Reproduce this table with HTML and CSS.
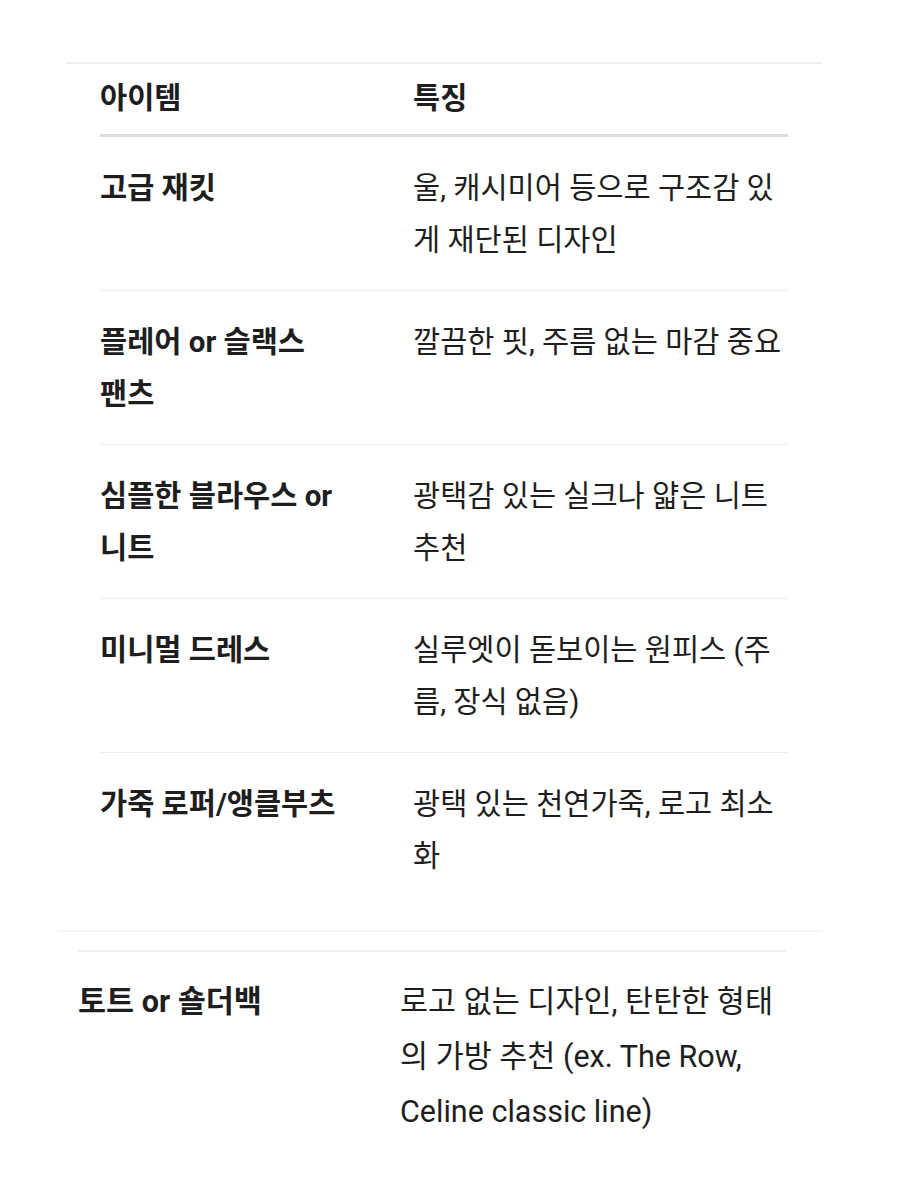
FILE: index.html
```html
<!DOCTYPE html>
<html lang="ko">
<head>
<meta charset="utf-8">
<link rel="stylesheet" href="styles.css">
</head>
<body>
<div class="page">
  <div class="rule-top"></div>
  <table class="tbl tbl-a">
    <thead>
      <tr><th class="c1">아이템</th><th class="c2">특징</th></tr>
    </thead>
    <tbody>
      <tr><td class="c1">고급 재킷</td><td class="c2">울, 캐시미어 등으로 구조감 있게 재단된 디자인</td></tr>
      <tr><td class="c1">플레어 or 슬랙스 팬츠</td><td class="c2">깔끔한 핏, 주름 없는 마감 중요</td></tr>
      <tr><td class="c1">심플한 블라우스 or 니트</td><td class="c2">광택감 있는 실크나 얇은 니트 추천</td></tr>
      <tr><td class="c1">미니멀 드레스</td><td class="c2">실루엣이 돋보이는 원피스 (주름, 장식 없음)</td></tr>
      <tr class="last"><td class="c1">가죽 로퍼/앵클부츠</td><td class="c2">광택 있는 천연가죽, 로고 최소화</td></tr>
    </tbody>
  </table>
  <div class="rule-faint"></div>
  <table class="tbl tbl-b">
    <tbody>
      <tr class="last"><td class="c1">토트 or 숄더백</td><td class="c2">로고 없는 디자인, 탄탄한 형태의 가방 추천 (ex. The Row, Celine classic line)</td></tr>
    </tbody>
  </table>
</div>
</body>
</html>
```

FILE: styles.css
```css
html, body {
  margin: 0;
  padding: 0;
  background: #ffffff;
}
body {
  font-family: Roboto, "Noto Sans CJK KR", sans-serif;
  color: #1e1e1e;
}
.page {
  padding-top: 62px;
  width: 900px;
  height: 1197px;
  box-sizing: border-box;
  overflow: hidden;
}
.rule-top {
  height: 2px;
  margin: 0 78px 0 66px;
  background: #efefef;
}
.tbl {
  border-collapse: collapse;
  table-layout: fixed;
}
.tbl th, .tbl td {
  text-align: left;
  vertical-align: top;
  padding: 0;
}
.tbl-a {
  margin-left: 100px;
  width: 688px;
  font-size: 29.5px;
  line-height: 52px;
}
.tbl-a .c1 { width: 255px; padding-right: 58px; }
.tbl-a .c2 { width: 375px; }
.tbl-a td.c1 { word-break: keep-all; }
.tbl-a th {
  font-weight: 700;
  padding-top: 8px;
  padding-bottom: 10px;
  border-bottom: 3px solid #dcdcdc;
}
.tbl-a td {
  padding-top: 25px;
  padding-bottom: 24px;
  border-bottom: 1px solid #eeeeee;
}
.tbl td.c1 { font-weight: 700; }
.tbl td.c2 { font-weight: 400; }
.tbl tr.last td { border-bottom: none; }
.rule-faint {
  height: 2px;
  margin: 24px 78px 0 58px;
  background: #f5f5f5;
}
.tbl-b {
  margin-top: 18px;
  margin-left: 78px;
  width: 708px;
  font-size: 30.5px;
  line-height: 55px;
  border-top: 2px solid #efefef;
}
.tbl-b .c1 { width: 322px; }
.tbl-b .c2 { width: 386px; }
.tbl-b td {
  padding-top: 22px;
  padding-bottom: 20px;
}
```
